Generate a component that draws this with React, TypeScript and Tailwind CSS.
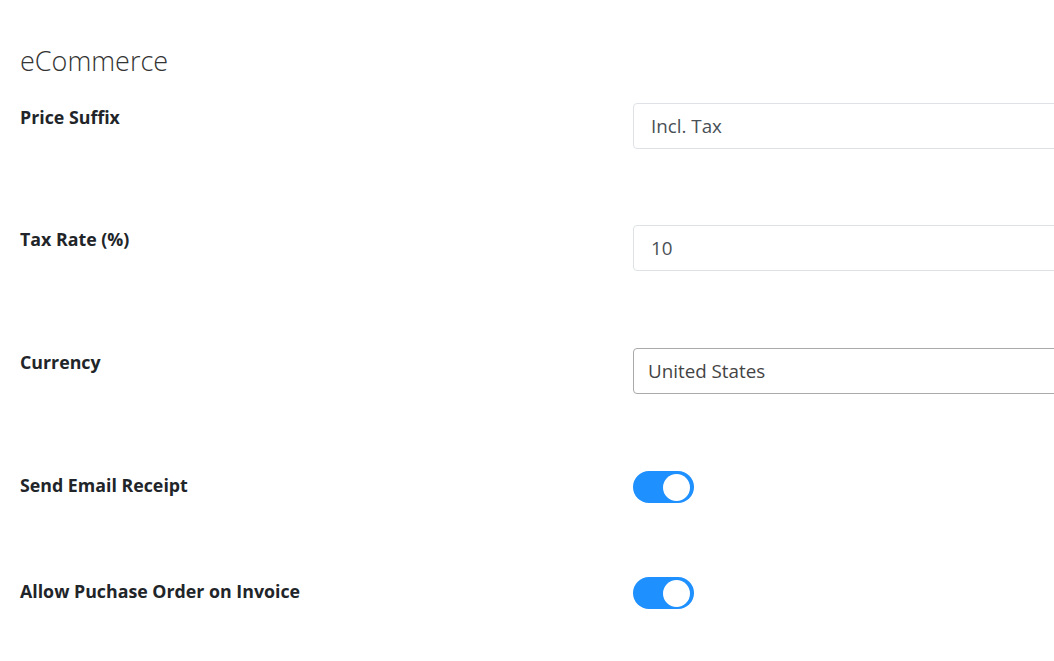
import React from "react";

function Toggle() {
  return (
    <div className="w-[61px] h-[32px] rounded-full bg-[#1e90ff] flex items-center justify-end pr-[4px]">
      <div className="w-[27px] h-[27px] rounded-full bg-white" />
    </div>
  );
}

function Row({ label, children, mb }: { label: string; children: React.ReactNode; mb: string }) {
  return (
    <div className={`flex items-start ${mb}`}>
      <div className="w-[613px] shrink-0 pt-[1px] text-[17.8px] leading-[26px] font-bold text-[#212529]">{label}</div>
      <div className="flex-1">{children}</div>
    </div>
  );
}

export default function App() {
  return (
    <div className="w-[1054px] h-[661px] overflow-hidden bg-white" style={{ fontFamily: '"Open Sans", sans-serif' }}>
      <div className="pl-[20px] pt-[43px]">
        <h1 className="text-[27px] leading-[36px] font-light text-[#333] mb-[24px]">eCommerce</h1>
        <Row label="Price Suffix" mb="mb-[76px]">
          <div className="w-[600px] h-[46px] border border-[#dee2e6] rounded-[4px] flex items-center pl-[17px] text-[18.8px] text-[#495057]">Incl. Tax</div>
        </Row>
        <Row label="Tax Rate (%)" mb="mb-[77px]">
          <div className="w-[600px] h-[46px] border border-[#dee2e6] rounded-[4px] flex items-center pl-[17px] text-[18.8px] text-[#495057]">10</div>
        </Row>
        <Row label="Currency" mb="mb-[77px]">
          <div className="w-[600px] h-[46px] border border-[#aaaaaa] rounded-[4px] flex items-center pl-[14px] text-[18.8px] text-[#444]">United States</div>
        </Row>
        <Row label="Send Email Receipt" mb="mb-[74px]">
          <Toggle />
        </Row>
        <Row label="Allow Puchase Order on Invoice" mb="">
          <Toggle />
        </Row>
      </div>
    </div>
  );
}
